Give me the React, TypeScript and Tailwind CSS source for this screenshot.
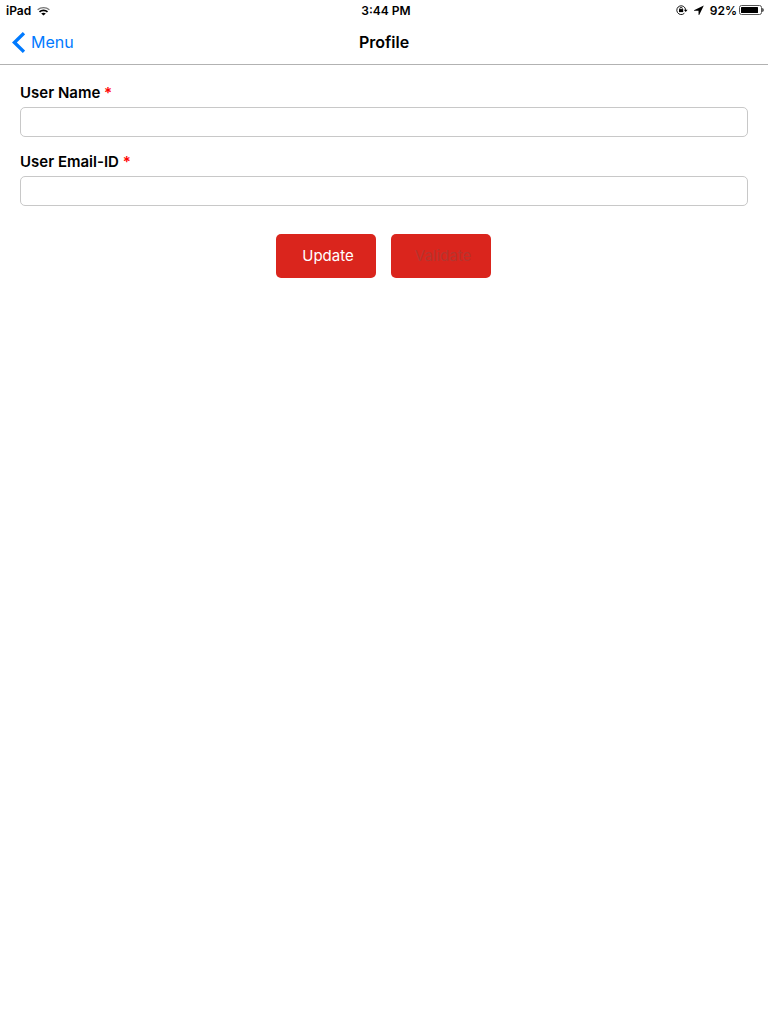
import React, { useState } from 'react';

interface FieldProps {
    id: string;
    label: string;
    type: string;
    value: string;
    onChange: (value: string) => void;
}

export default function App() {
    const [userName, setUserName] = useState('');
    const [email, setEmail] = useState('');

    return (
        <div className="min-h-screen bg-white text-black font-['Inter',sans-serif]">
            <header className="border-b border-[#b2b2b2]">
                <StatusBar />
                <nav className="grid h-11 grid-cols-3 items-center px-3">
                    <a href="#menu" className="flex items-center gap-1.5 text-base text-[#007aff]">
                        <BackIcon />
                        Menu
                    </a>
                    <h1 className="text-center text-base font-semibold">Profile</h1>
                </nav>
            </header>

            <form className="px-5 pt-[17px]" onSubmit={(e) => e.preventDefault()}>
                <div className="flex flex-col gap-3.5">
                    <Field id="user-name" label="User Name" type="text" value={userName} onChange={setUserName} />
                    <Field id="user-email" label="User Email-ID" type="email" value={email} onChange={setEmail} />
                </div>
                <div className="mt-7 flex justify-center gap-[15px] pr-px">
                    <button type="submit" className="h-11 w-[100px] rounded-[5px] bg-[#da251d] pl-1 text-[15px] text-white">
                        Update
                    </button>
                    <button type="button" disabled className="h-11 w-[100px] rounded-[5px] bg-[#da251d] pl-1 text-[15px] text-[#b5352f]">
                        Validate
                    </button>
                </div>
            </form>
        </div>
    );
}

function Field({ id, label, type, value, onChange }: FieldProps) {
    return (
        <div>
            <label htmlFor={id} className="mb-[3px] block text-[15px] leading-[22px] font-semibold">
                {label} <span className="text-[#ff0000]">*</span>
            </label>
            <input
                id={id}
                type={type}
                value={value}
                onChange={(e) => onChange(e.target.value)}
                className="block h-[30px] w-full rounded-[5px] border border-[#c8c8c8] bg-white px-2 text-sm outline-none"
            />
        </div>
    );
}

function StatusBar() {
    return (
        <div className="grid h-5 grid-cols-3 items-center px-1.5 pt-0.5 text-xs font-semibold">
            <div className="flex items-center gap-1.5">
                iPad
                <WifiIcon />
            </div>
            <div className="pl-1 text-center">3:44 PM</div>
            <div className="-mr-0.5 flex items-center justify-end">
                <RotationLockIcon />
                <LocationIcon />
                <span className="mr-0.5 ml-1.5">92%</span>
                <BatteryIcon />
            </div>
        </div>
    );
}

function BackIcon() {
    return (
        <svg width="13" height="21" viewBox="0 0 13 21" fill="none" stroke="currentColor" strokeWidth="3.4" aria-hidden="true">
            <path d="M12 1.2 2.4 10.5 12 19.8" />
        </svg>
    );
}

function WifiIcon() {
    return (
        <svg width="13" height="9" viewBox="0 0 13 9" fill="none" stroke="currentColor" aria-hidden="true">
            <path d="M.6 2.7C4-.1 9-.1 12.4 2.7" stroke="#777" strokeWidth="1.2" />
            <path d="M2.5 4.8c2.2-1.9 5.8-1.9 8 0" strokeWidth="1.7" />
            <path d="M6.5 8.6 4.2 6.5c1.2-1.1 3.4-1.1 4.6 0Z" fill="currentColor" stroke="none" />
        </svg>
    );
}

function RotationLockIcon() {
    return (
        <svg className="mb-0.5" width="12" height="10" viewBox="0 0 12 10" fill="none" stroke="currentColor" aria-hidden="true">
            <path d="M8.4 8.2A4.4 4.4 0 1 1 9.6 4.9" strokeWidth=".9" />
            <path d="M7.8 4.8h3.8L9.7 7Z" fill="currentColor" stroke="none" />
            <rect x="3" y="4.1" width="4.2" height="3" fill="currentColor" stroke="none" />
            <path d="M3.9 4.3v-.8a1.2 1.2 0 0 1 2.4 0v.8" strokeWidth=".8" />
        </svg>
    );
}

function LocationIcon() {
    return (
        <svg className="mb-0.5 ml-1.5" width="10" height="10" viewBox="0 0 10 10" fill="currentColor" aria-hidden="true">
            <path d="M9.8.4 0 5.2 0 5.8 4.5 5.8 4.6 10 5.2 10Z" />
        </svg>
    );
}

function BatteryIcon() {
    return (
        <svg className="mb-0.5" width="25" height="10" viewBox="0 0 25 10" aria-hidden="true">
            <rect x=".5" y=".5" width="22" height="9" rx="2" fill="none" stroke="#555" />
            <rect x="2" y="2" width="17" height="6" rx=".5" fill="#000" />
            <path d="M23.4 3c1.6.4 1.6 3.6 0 4Z" fill="#000" />
        </svg>
    );
}
